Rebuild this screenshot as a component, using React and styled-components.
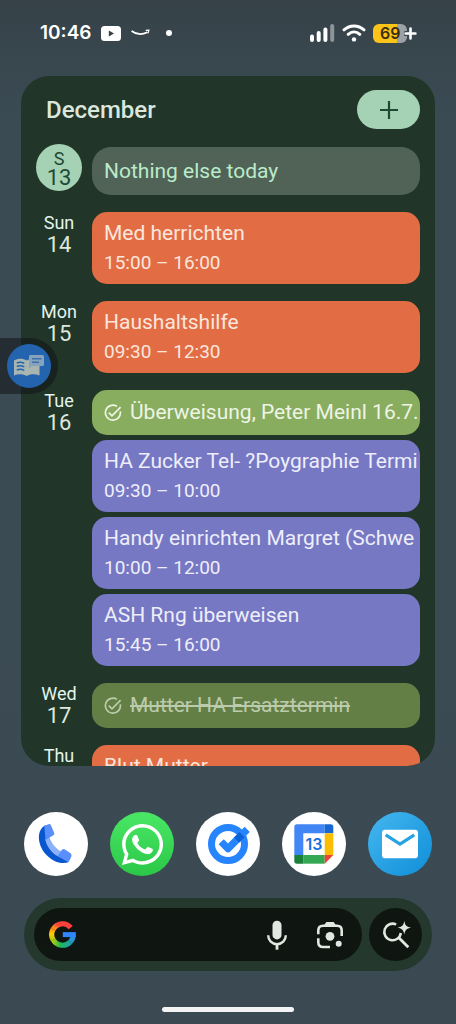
import styled, { createGlobalStyle } from "styled-components";
import { FaWhatsapp } from "react-icons/fa";

const GlobalStyle = createGlobalStyle`
  * {
    box-sizing: border-box;
  }

  body {
    margin: 0;
    font-family: Roboto, "Liberation Sans", sans-serif;
    background: #3b4a52;
  }
`;

const Screen = styled.main`
  position: relative;
  display: flex;
  flex-direction: column;
  height: 100vh;
  overflow: hidden;
  background: linear-gradient(#364248 0, #3b4b54 120px, #3b4a52 100%);
`;

const StatusBar = styled.header`
  display: flex;
  align-items: center;
  justify-content: space-between;
  height: 66px;
  padding: 0 49px 0 40px;
  color: #ffffff;
`;

const StatusGroup = styled.div`
  display: flex;
  align-items: center;
  gap: ${({ $gap }) => $gap}px;
`;

const Clock = styled.time`
  font-family: Inter, sans-serif;
  font-size: 19px;
  font-weight: 600;
  line-height: 24px;
`;

const Battery = styled.div`
  position: relative;
  display: flex;
  align-items: center;
  width: 34px;
  height: 19px;
  padding-left: 7px;
  border-radius: 6px;
  background: linear-gradient(90deg, #fcc419 70%, #9ba1a5 70%);
  color: #3a2f0c;
  font-family: Inter, sans-serif;
  font-size: 16px;
  font-weight: 600;

  svg {
    position: absolute;
    right: -10px;
    top: 3px;
  }
`;

const Widget = styled.section`
  display: flex;
  flex: 1;
  flex-direction: column;
  min-height: 0;
  margin: 10px 21px 0;
  padding: 14px 15px 0;
  overflow: hidden;
  border-radius: 28px;
  background: #213529;
`;

const WidgetHeader = styled.div`
  display: flex;
  align-items: center;
  justify-content: space-between;
  padding-left: 10px;
  margin-bottom: 15px;

  h1 {
    margin: 0;
    color: #dbe7dc;
    font-size: 24px;
    font-weight: 500;
    line-height: 28px;
  }
`;

const AddButton = styled.button`
  display: flex;
  align-items: center;
  justify-content: center;
  width: 63px;
  height: 39px;
  padding: 0;
  border: none;
  border-radius: 20px;
  background: #a5d2b5;
  color: #1d4a33;
`;

const DayList = styled.ul`
  display: flex;
  flex: 1;
  flex-direction: column;
  gap: 17px;
  min-height: 0;
  margin: 0;
  padding: 0;
  overflow: hidden;
  list-style: none;
`;

const DayRow = styled.li`
  display: flex;
  flex-shrink: 0;
  align-items: ${({ $today }) => ($today ? "flex-end" : "flex-start")};
  gap: 10px;
`;

const DayLabel = styled.div`
  width: 46px;
  color: #dce8de;
  text-align: center;

  span {
    display: block;
    color: #e2f5ee;
    font-size: 18px;
    line-height: 22px;
  }

  b {
    display: block;
    font-size: 22px;
    font-weight: 400;
    line-height: 22px;
  }
`;

const TodayLabel = styled(DayLabel)`
  height: 47px;
  margin-bottom: 4px;
  padding-top: 6px;
  border-radius: 50%;
  background: #a5d2b5;
  color: #1d4a33;

  span {
    color: #1d4a33;
    line-height: 18px;
  }

  b {
    line-height: 20px;
  }
`;

const Events = styled.div`
  display: flex;
  flex: 1;
  flex-direction: column;
  gap: 5px;
  min-width: 0;
`;

const cardColors = {
  empty: { background: "#506356", color: "#bbebcb" },
  orange: { background: "#e26d45", color: "#fbe6dd" },
  green: { background: "#89ad5f", color: "#eef4e6" },
  done: { background: "#637f45", color: "#bccbab" },
  purple: { background: "#7678c4", color: "#eeeefa" },
};

const Card = styled.article`
  padding: ${({ $single }) => ($single ? 8 : 7)}px 2px
    ${({ $single }) => ($single ? 8 : 7)}px 12px;
  border-radius: 15px;
  background: ${({ $kind }) => cardColors[$kind].background};
  color: ${({ $kind }) => cardColors[$kind].color};
`;

const EmptyCard = styled(Card)`
  padding: 10px 12px 9px;
  border-radius: 19px;
`;

const Title = styled.div`
  display: flex;
  align-items: center;
  gap: 8px;
  overflow: hidden;
  font-size: 21px;
  line-height: 29px;
  white-space: nowrap;
  text-decoration: ${({ $done }) => ($done ? "line-through" : "none")};

  svg {
    flex-shrink: 0;
  }
`;

const Hours = styled.div`
  font-size: 19px;
  line-height: 29px;
`;

const Bubble = styled.button`
  position: absolute;
  top: 338px;
  left: 0;
  display: flex;
  align-items: center;
  justify-content: flex-end;
  width: 58px;
  height: 56px;
  padding: 0 7px 0 0;
  border: none;
  border-radius: 0 28px 28px 0;
  background: rgba(16, 16, 20, 0.5);

  span {
    display: flex;
    align-items: center;
    justify-content: center;
    width: 44px;
    height: 44px;
    border-radius: 50%;
    background: #2463ae;
  }
`;

const Dock = styled.nav`
  display: flex;
  justify-content: space-between;
  margin: 46px 24px 22px;
`;

const AppLink = styled.a`
  display: flex;
  align-items: center;
  justify-content: center;
  width: 64px;
  height: 64px;
  border-radius: 50%;
  background: ${({ $background }) => $background || "#ffffff"};
  color: #ffffff;
`;

const SearchBar = styled.form`
  display: flex;
  gap: 7px;
  margin: 0 24px;
  padding: 10px;
  border-radius: 37px;
  background: #25382d;
`;

const SearchField = styled.div`
  display: flex;
  flex: 1;
  align-items: center;
  min-width: 0;
  height: 53px;
  padding: 0 17px 0 15px;
  border-radius: 27px;
  background: #0f1611;

  input {
    flex: 1;
    min-width: 0;
    border: none;
    outline: none;
    background: transparent;
    color: #dfe9df;
    font-size: 18px;
  }
`;

const IconButton = styled.button`
  display: flex;
  align-items: center;
  justify-content: center;
  width: ${({ $round }) => ($round ? 53 : 30)}px;
  height: ${({ $round }) => ($round ? 53 : 30)}px;
  margin-left: ${({ $spaced }) => ($spaced ? 23 : 0)}px;
  padding: 0;
  border: none;
  border-radius: 50%;
  background: ${({ $round }) => ($round ? "#0f1611" : "transparent")};
  color: #dfe9df;
`;

const HomeBar = styled.div`
  align-self: center;
  width: 132px;
  height: 5px;
  margin: 36px 0 12px;
  border-radius: 3px;
  background: #f3f3f3;
`;

const YoutubeIcon = () => (
  <svg width="20" height="15" viewBox="0 0 20 15">
    <rect width="20" height="15" rx="3.5" fill="#fff" />
    <path d="M7.8 4.6 13 7.5 7.8 10.4Z" fill="#364248" />
  </svg>
);

const SmileIcon = () => (
  <svg width="19" height="8" viewBox="0 0 19 8" fill="none" stroke="#fff">
    <path d="M.6 2C5 5.400 11 6 16.400 3.200" strokeWidth="1.800" />
    <path d="M14.800 1.400 17.900 1.200 17 4.400" strokeWidth="1.200" />
  </svg>
);

const SignalIcon = () => (
  <svg width="25" height="18" viewBox="0 0 25 18" fill="#fff">
    <rect y="10.500" width="4" height="7.500" rx="2" />
    <rect x="6.700" y="7" width="4" height="11" rx="2" />
    <rect x="13.400" y="3.500" width="4" height="14.500" rx="2" />
    <rect x="20.200" width="4" height="18" rx="2" fill="#8d9599" />
  </svg>
);

const WifiIcon = () => (
  <svg width="24" height="18" viewBox="0 0 24 18" fill="none" stroke="#fff">
    <path
      d="M2 5.800C7.800.600 16.200.600 22 5.800M6.200 10.300C9.600 7.300 14.400 7.300 17.800 10.300"
      strokeWidth="3"
      strokeLinecap="round"
    />
    <circle cx="12" cy="15.400" r="2.200" fill="#fff" stroke="none" />
  </svg>
);

const ChargeIcon = () => (
  <svg width="13" height="13" viewBox="0 0 13 13" strokeLinecap="round">
    <path d="M6.500 1.800V11.200M1.800 6.500H11.200" stroke="#3b4850" strokeWidth="5" />
    <path d="M6.500 1.600V11.400M1.600 6.500H11.400" stroke="#fff" strokeWidth="2.600" />
  </svg>
);

const PlusIcon = () => (
  <svg width="18" height="18" viewBox="0 0 18 18" stroke="currentColor">
    <path d="M9 0V18M0 9H18" strokeWidth="2.200" />
  </svg>
);

const TaskIcon = () => (
  <svg
    width="18"
    height="18"
    viewBox="0 0 18 18"
    fill="none"
    stroke="currentColor"
    strokeWidth="1.700"
  >
    <path d="M13 2.400A7.500 7.500 0 1 0 16.300 7.300" />
    <path d="M4.800 8.600 8 11.800 16.600 3.200" />
  </svg>
);

const BookIcon = () => (
  <svg width="30" height="22" viewBox="0 0 30 22">
    <path
      d="M0 5.500C4 3 9 3 12.700 5.500 16 3 21 3 25.500 5.500V20.500C21 18.500 16 18.700 12.700 21 9 18.700 4 18.500 0 20.500Z"
      fill="#a8b5b1"
    />
    <path
      d="M2.800 8C5 7 8 7.200 10.300 8.400M2.800 11.500C5 10.500 8 10.700 10.300 11.900M2.800 15C5 14 8 14.200 10.300 15.400"
      fill="none"
      stroke="#2463ae"
      strokeWidth="1.500"
    />
    <path d="M16 0H28.500Q30 0 30 1.500V9.500Q30 11 28.500 11H18L15 13.500V1.500Q15 0 16 0Z" fill="#86a3bd" />
    <path d="M18 3.800H27.500M18 7.300H25" stroke="#3d70ab" strokeWidth="1.500" />
  </svg>
);

const PhoneIcon = () => (
  <svg width="64" height="64" viewBox="0 0 64 64">
    <path
      d="M21.500 13.200C12.500 17.500 12.800 32 22 42.500 29.500 50.800 38.500 52.500 45 50L33.500 43.800C28 41 22.800 33.500 21.500 27.500L26 20Z"
      fill="#0957d0"
    />
    <path d="M21.400 27.400 25.300 24.600C27 31 31.500 36.500 37.300 39.600L33.600 43.900C27.500 40.500 22.500 33.800 21.400 27.400Z" fill="#8cb1fb" />
    <path d="M20.300 13.800 24.500 12.200Q26.300 11.800 27 13.500L30.200 20.800Q30.800 22.300 29.400 23.300L21.600 28Z" fill="#5a8ffb" />
    <path d="M33.300 44 37.800 38Q39.200 36.500 41 37.500L46.500 41.300Q48.200 42.700 47.300 44.500 46.500 47.500 44.500 50.100Z" fill="#5a8ffb" />
  </svg>
);

const TasksIcon = () => (
  <svg width="64" height="64" viewBox="0 0 64 64" fill="none">
    <circle cx="32" cy="32" r="16.500" stroke="#2684fc" strokeWidth="7" />
    <path d="M25.200 29.800 32 36.600 51.200 17.400" stroke="#2684fc" strokeWidth="7.200" strokeLinejoin="round" />
    <path d="M40.600 28 46 22.600" stroke="#0b62d6" strokeWidth="7.200" />
  </svg>
);

const CalendarIcon = () => (
  <svg width="64" height="64" viewBox="0 0 64 64">
    <path d="M15 12.300H42.700V21.300H21.300V43H12.300V15Q12.300 12.300 15 12.300Z" fill="#4285f4" />
    <path d="M42.700 12.300H48.700Q51.300 12.300 51.300 15V21.300H42.700Z" fill="#1967d2" />
    <path d="M42.700 21.300H51.300V43H42.700Z" fill="#fbbc04" />
    <path d="M21.300 43H42.700V51.700H21.300Z" fill="#34a853" />
    <path d="M12.300 43H21.300V51.700H15Q12.300 51.700 12.300 49Z" fill="#188038" />
    <path d="M42.700 43H51.300L42.700 51.700Z" fill="#ea4335" />
    <text
      x="32"
      y="38"
      fill="#1a6fe0"
      fontFamily="Inter, sans-serif"
      fontSize="16"
      fontWeight="600"
      textAnchor="middle"
    >
      13
    </text>
  </svg>
);

const MailIcon = () => (
  <svg width="64" height="64" viewBox="0 0 64 64" fill="none">
    <rect x="14" y="17.700" width="36" height="28.600" rx="3" fill="#fff" />
    <path d="M17.700 22.800 32 32 46.300 22.800" stroke="#27a3e2" strokeWidth="3.200" />
  </svg>
);

const GoogleIcon = () => (
  <svg width="27" height="27" viewBox="0 0 27 27" fill="none" strokeWidth="5.200">
    <defs>
      <linearGradient id="g-red" x1="1" y1="0" x2="0" y2="0.600">
        <stop offset="0.600" stopColor="#fc413d" />
        <stop offset="1" stopColor="#fd8a1c" />
      </linearGradient>
      <linearGradient id="g-yellow" gradientUnits="userSpaceOnUse" x1="3" y1="8" x2="3" y2="19">
        <stop offset="0" stopColor="#fd8a1c" />
        <stop offset="0.400" stopColor="#ffcc00" />
        <stop offset="1" stopColor="#b3cc12" />
      </linearGradient>
      <linearGradient id="g-green" gradientUnits="userSpaceOnUse" x1="4" y1="19" x2="22" y2="21">
        <stop offset="0" stopColor="#b3cc12" />
        <stop offset="0.400" stopColor="#20bc4e" />
        <stop offset="1" stopColor="#1f9fae" />
      </linearGradient>
      <linearGradient id="g-blue" gradientUnits="userSpaceOnUse" x1="21" y1="22" x2="24" y2="14">
        <stop offset="0" stopColor="#1f9fae" />
        <stop offset="1" stopColor="#3186ff" />
      </linearGradient>
    </defs>
    <path d="M21.700 6.600A10.700 10.700 0 0 0 4.200 8.200" stroke="url(#g-red)" />
    <path d="M4.200 8.100A10.700 10.700 0 0 0 4.200 18.900" stroke="url(#g-yellow)" />
    <path d="M4.200 18.800A10.700 10.700 0 0 0 21.100 21.100" stroke="url(#g-green)" />
    <path d="M21 21.200A10.700 10.700 0 0 0 24.200 13.500" stroke="url(#g-blue)" />
    <path d="M13.800 13.600H26.800" stroke="#3186ff" strokeWidth="5" />
  </svg>
);

const MicIcon = () => (
  <svg width="30" height="30" viewBox="0 0 30 30" fill="none" stroke="currentColor">
    <rect x="10.500" y="0.700" width="9" height="18.700" rx="4.500" fill="currentColor" stroke="none" />
    <path d="M6.200 15.200C6.200 20.500 10 24.200 15 24.200S23.800 20.500 23.800 15.200" strokeWidth="2.400" />
    <path d="M15 24V29.700" strokeWidth="2.800" />
  </svg>
);

const LensIcon = () => (
  <svg width="30" height="30" viewBox="0 0 30 30" fill="none" stroke="currentColor" strokeWidth="2.600">
    <path d="M3.300 14.300V10.500Q3.300 5.800 8 5.800H22Q26.700 5.800 26.700 10.500V16" />
    <path d="M3.300 18.300V22.300Q3.300 27 8 27H15" />
    <path d="M9.300 5 11.300 2H18.700L20.700 5Z" fill="currentColor" stroke="none" />
    <circle cx="15" cy="16.300" r="4.400" fill="currentColor" stroke="none" />
    <circle cx="23.700" cy="23.700" r="3" fill="currentColor" stroke="none" />
  </svg>
);

const AiSearchIcon = () => (
  <svg width="30" height="30" viewBox="0 0 30 30" fill="none" stroke="currentColor" strokeWidth="2.500">
    <path d="M15.200 4.500A8.300 8.300 0 1 0 19.800 13" />
    <path d="M17.300 17.300 27.300 27.300" strokeWidth="2.800" />
    <path
      d="M23.300.800C24 5.300 25.600 7 30 7.700 25.600 8.400 24 10.100 23.300 14.600 22.600 10.100 21 8.400 16.600 7.700 21 7 22.600 5.300 23.300.800Z"
      fill="currentColor"
      stroke="none"
    />
  </svg>
);

const days = [
  {
    name: "Sun",
    date: 14,
    events: [{ title: "Med herrichten", hours: "15:00 – 16:00", kind: "orange" }],
  },
  {
    name: "Mon",
    date: 15,
    events: [{ title: "Haushaltshilfe", hours: "09:30 – 12:30", kind: "orange" }],
  },
  {
    name: "Tue",
    date: 16,
    events: [
      { title: "Überweisung, Peter Meinl 16.7.1", kind: "green" },
      { title: "HA Zucker Tel- ?Poygraphie Termi", hours: "09:30 – 10:00", kind: "purple" },
      { title: "Handy einrichten Margret (Schwe", hours: "10:00 – 12:00", kind: "purple" },
      { title: "ASH Rng überweisen", hours: "15:45 – 16:00", kind: "purple" },
    ],
  },
  {
    name: "Wed",
    date: 17,
    events: [{ title: "Mutter HA Ersatztermin", kind: "done" }],
  },
  {
    name: "Thu",
    events: [{ title: "Blut Mutter", kind: "orange", plain: true }],
  },
];

const apps = [
  { name: "Phone", icon: <PhoneIcon /> },
  {
    name: "WhatsApp",
    icon: <FaWhatsapp size={47} />,
    background: "linear-gradient(#4be665, #2bc847)",
  },
  { name: "Tasks", icon: <TasksIcon /> },
  { name: "Calendar", icon: <CalendarIcon /> },
  {
    name: "Mail",
    icon: <MailIcon />,
    background: "linear-gradient(135deg, #45b7f0, #0f8ed8)",
  },
];

const Event = ({ title, hours, kind, plain }) => {
  const isTask = !hours && !plain;

  return (
    <Card $kind={kind} $single={isTask}>
      <Title $done={kind === "done"}>
        {isTask && <TaskIcon />}
        <span>{title}</span>
      </Title>
      {hours && <Hours>{hours}</Hours>}
    </Card>
  );
};

const Agenda = () => (
  <Widget>
    <WidgetHeader>
      <h1>December</h1>
      <AddButton type="button" aria-label="Add event">
        <PlusIcon />
      </AddButton>
    </WidgetHeader>
    <DayList>
      <DayRow $today>
        <TodayLabel>
          <span>S</span>
          <b>13</b>
        </TodayLabel>
        <Events>
          <EmptyCard $kind="empty">
            <Title>Nothing else today</Title>
          </EmptyCard>
        </Events>
      </DayRow>
      {days.map((day) => (
        <DayRow key={day.name}>
          <DayLabel>
            <span>{day.name}</span>
            {day.date && <b>{day.date}</b>}
          </DayLabel>
          <Events>
            {day.events.map((event) => (
              <Event key={event.title} {...event} />
            ))}
          </Events>
        </DayRow>
      ))}
    </DayList>
  </Widget>
);

export default function App() {
  return (
    <Screen>
      <GlobalStyle />
      <StatusBar>
        <StatusGroup $gap={10}>
          <Clock>10:46</Clock>
          <YoutubeIcon />
          <SmileIcon />
          <svg width="20" height="6" viewBox="0 0 20 6">
            <circle cx="9" cy="3" r="3" fill="#fff" />
          </svg>
        </StatusGroup>
        <StatusGroup $gap={7}>
          <SignalIcon />
          <WifiIcon />
          <Battery>
            69
            <ChargeIcon />
          </Battery>
        </StatusGroup>
      </StatusBar>
      <Agenda />
      <Dock>
        {apps.map(({ name, icon, background }) => (
          <AppLink key={name} href="#" aria-label={name} $background={background}>
            {icon}
          </AppLink>
        ))}
      </Dock>
      <SearchBar>
        <SearchField>
          <GoogleIcon />
          <input type="text" aria-label="Search" />
          <IconButton type="button" aria-label="Voice search">
            <MicIcon />
          </IconButton>
          <IconButton type="button" aria-label="Image search" $spaced>
            <LensIcon />
          </IconButton>
        </SearchField>
        <IconButton type="submit" aria-label="AI search" $round>
          <AiSearchIcon />
        </IconButton>
      </SearchBar>
      <HomeBar />
      <Bubble type="button" aria-label="Dictionary">
        <span>
          <BookIcon />
        </span>
      </Bubble>
    </Screen>
  );
}
